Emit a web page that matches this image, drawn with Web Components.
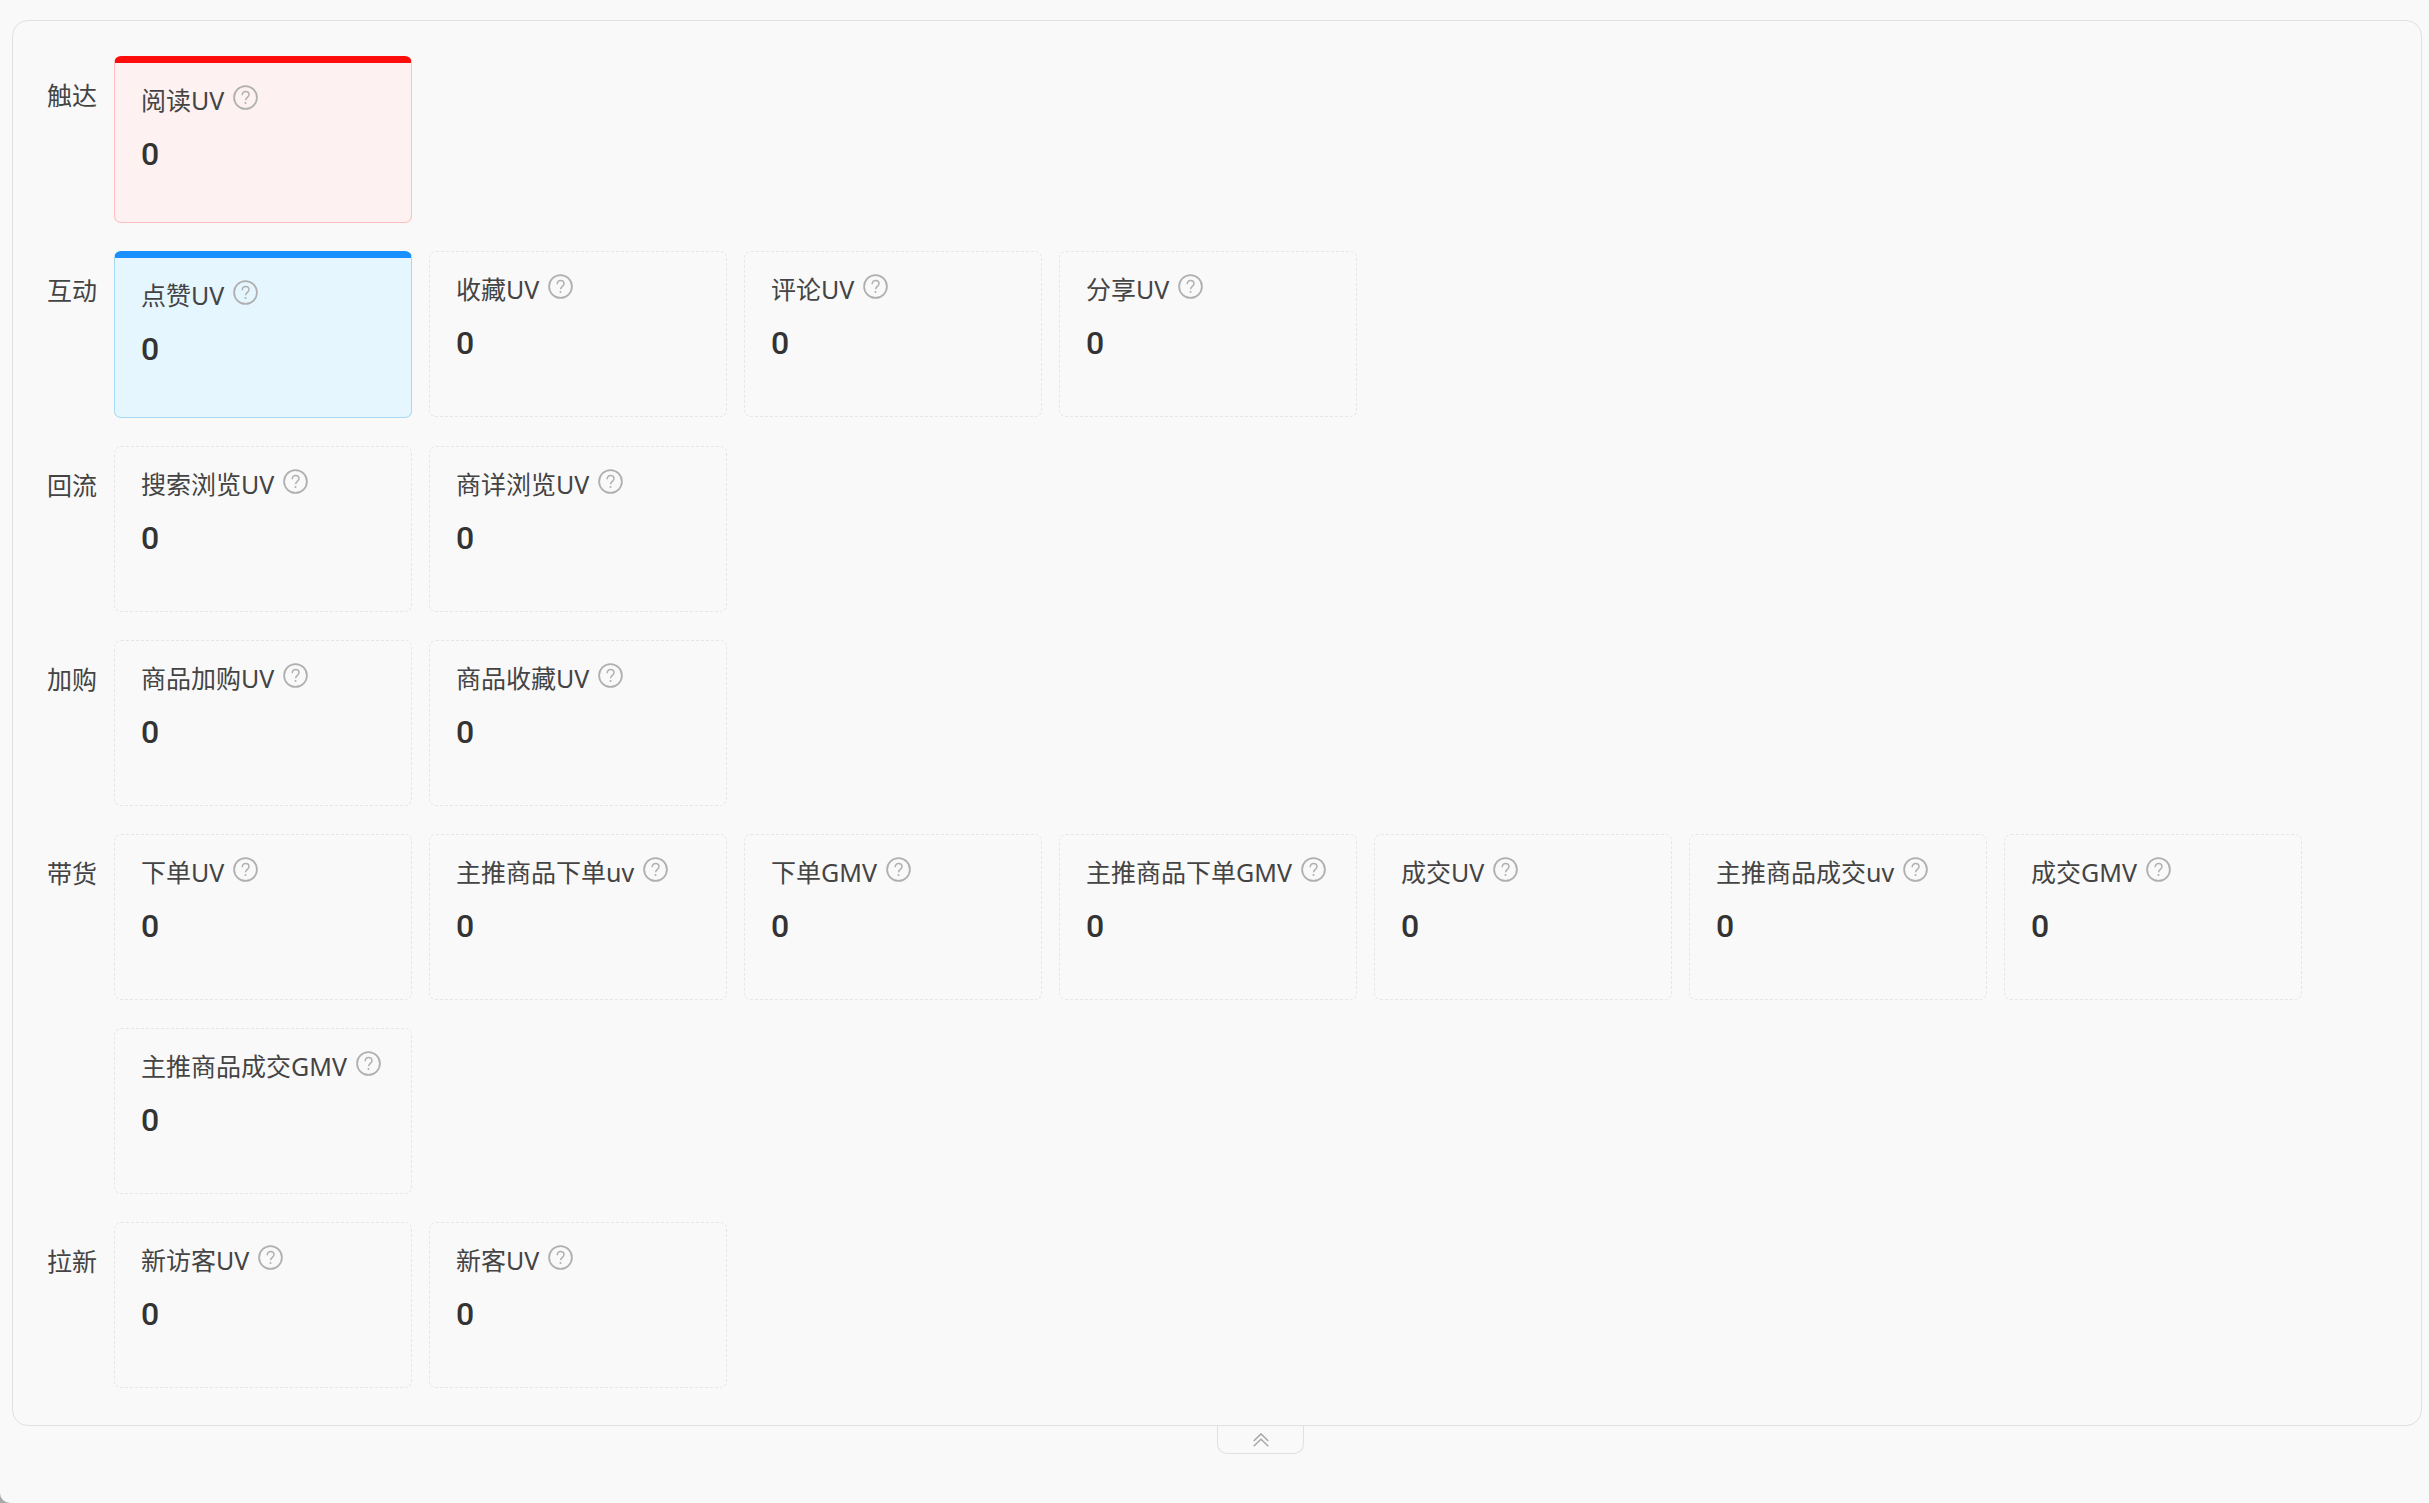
<!DOCTYPE html>
<html lang="zh-CN">
<head>
<meta charset="utf-8">
<title>UV</title>
<style>
html {
  background: #a8a8a8;
}

body {
  margin: 0;
  min-height: 100vh;
  box-sizing: border-box;
  padding: 20px 7px 20px 12px;
  background: #f9f9f9;
  border-bottom-left-radius: 10px;
  font-family: "Noto Sans", "Noto Sans CJK SC", sans-serif;
  font-weight: 400;
  font-size: 25px;
  line-height: 32px;
  color: #444;
}
</style>
</head>
<body>

<metric-panel>
  <metric-group label="触达">
    <metric-card name="阅读UV" value="0" tone="red"></metric-card>
  </metric-group>
  <metric-group label="互动">
    <metric-card name="点赞UV" value="0" tone="blue"></metric-card>
    <metric-card name="收藏UV" value="0"></metric-card>
    <metric-card name="评论UV" value="0"></metric-card>
    <metric-card name="分享UV" value="0"></metric-card>
  </metric-group>
  <metric-group label="回流">
    <metric-card name="搜索浏览UV" value="0"></metric-card>
    <metric-card name="商详浏览UV" value="0"></metric-card>
  </metric-group>
  <metric-group label="加购">
    <metric-card name="商品加购UV" value="0"></metric-card>
    <metric-card name="商品收藏UV" value="0"></metric-card>
  </metric-group>
  <metric-group label="带货">
    <metric-card name="下单UV" value="0"></metric-card>
    <metric-card name="主推商品下单uv" value="0"></metric-card>
    <metric-card name="下单GMV" value="0"></metric-card>
    <metric-card name="主推商品下单GMV" value="0"></metric-card>
    <metric-card name="成交UV" value="0"></metric-card>
    <metric-card name="主推商品成交uv" value="0"></metric-card>
    <metric-card name="成交GMV" value="0"></metric-card>
    <metric-card name="主推商品成交GMV" value="0"></metric-card>
  </metric-group>
  <metric-group label="拉新">
    <metric-card name="新访客UV" value="0"></metric-card>
    <metric-card name="新客UV" value="0"></metric-card>
  </metric-group>
</metric-panel>

<script>
const helpTemplate = document.createElement("template");
helpTemplate.innerHTML = `
<style>
:host {
  display: block;
  flex: none;
}

button {
  display: block;
  padding: 0;
  border: 0;
  background: none;
  color: #b0b0b0;
  cursor: pointer;
}

svg {
  display: block;
}
</style>

<button type="button">
  <svg width="25" height="25" viewBox="0 0 25 25" fill="none" stroke="currentColor">
    <circle cx="12.5" cy="12.5" r="11.4" stroke-width="1.8"/>
    <path d="M9.2 10.2c0-2.1 1.3-3.6 3.4-3.6s3.4 1.3 3.4 3.2c0 2.6-3.4 2.7-3.4 5.5" stroke-width="1.5"/>
    <circle cx="12.5" cy="18" r="1" fill="currentColor" stroke="none"/>
  </svg>
</button>
`;

class HelpIcon extends HTMLElement {
  connectedCallback() {
    this.attachShadow({ mode: "open" });
    this.shadowRoot.appendChild(helpTemplate.content.cloneNode(true));
  }
}

customElements.define("help-icon", HelpIcon);

const cardTemplate = document.createElement("template");
cardTemplate.innerHTML = `
<style>
:host {
  display: block;
  box-sizing: border-box;
  width: 298px;
  min-height: 166px;
  padding: 21px 16px 16px 26px;
  border: 1px dashed #e6e6e6;
  border-radius: 7px;
}

:host([tone]) {
  min-height: 167px;
  border-style: solid;
  border-top-width: 7px;
}

:host([tone="red"]) {
  border-color: #ff0d0d #ffbfbf #ffbfbf;
  background: #fef1f1;
}

:host([tone="blue"]) {
  border-color: #1890ff #a6d9f2 #a6d9f2;
  background: #e5f6ff;
}

.head {
  display: flex;
  align-items: flex-start;
  gap: 9px;
}

.name {
  white-space: nowrap;
}

help-icon {
  margin-top: 1px;
}

.value {
  margin-top: 22px;
  font-family: Roboto, sans-serif;
  font-weight: 500;
  font-size: 32px;
  line-height: 32px;
  color: #333;
}
</style>

<div class="head">
  <span class="name"></span>
  <help-icon></help-icon>
</div>
<div class="value"></div>
`;

class MetricCard extends HTMLElement {
  connectedCallback() {
    this.attachShadow({ mode: "open" });
    this.shadowRoot.appendChild(cardTemplate.content.cloneNode(true));

    this.shadowRoot.querySelector(".name").textContent = this.getAttribute("name");
    this.shadowRoot.querySelector(".value").textContent = this.getAttribute("value");
    this.shadowRoot.querySelector("help-icon").shadowRoot
      .querySelector("button").setAttribute("aria-label", this.getAttribute("name"));
  }
}

customElements.define("metric-card", MetricCard);

const groupTemplate = document.createElement("template");
groupTemplate.innerHTML = `
<style>
:host {
  display: flex;
  gap: 17px;
}

.label {
  flex: none;
  padding-top: 23px;
}

.cards {
  flex: 1;
  display: flex;
  flex-wrap: wrap;
  align-items: flex-start;
  gap: 28px 17px;
}
</style>

<div class="label"></div>
<div class="cards"><slot></slot></div>
`;

class MetricGroup extends HTMLElement {
  connectedCallback() {
    this.attachShadow({ mode: "open" });
    this.shadowRoot.appendChild(groupTemplate.content.cloneNode(true));
    this.shadowRoot.querySelector(".label").textContent = this.getAttribute("label");
  }
}

customElements.define("metric-group", MetricGroup);

const panelTemplate = document.createElement("template");
panelTemplate.innerHTML = `
<style>
:host {
  display: block;
}

.groups {
  display: flex;
  flex-direction: column;
  gap: 28px;
  padding: 35px 34px 37px;
  border: 1px solid #e0e0e0;
  border-radius: 16px;
}

.groups.folded {
  display: none;
}

.foot {
  display: flex;
  justify-content: center;
  padding-left: 87px;
}

.toggle {
  display: flex;
  justify-content: center;
  align-items: center;
  width: 87px;
  height: 28px;
  padding: 0;
  border: 1px solid #e0e0e0;
  border-top: 0;
  border-radius: 0 0 10px 10px;
  background: none;
  color: #a8a8a8;
  cursor: pointer;
}
</style>

<div class="groups"><slot></slot></div>
<div class="foot">
  <button class="toggle" type="button" aria-label="收起">
    <svg width="16" height="14" viewBox="0 0 16 14" fill="none" stroke="currentColor" stroke-width="1.5">
      <path d="M.7 8 8 .9 15.3 8M.7 13.3 8 6.2l7.3 7.1"/>
    </svg>
  </button>
</div>
`;

class MetricPanel extends HTMLElement {
  connectedCallback() {
    this.attachShadow({ mode: "open" });
    this.shadowRoot.appendChild(panelTemplate.content.cloneNode(true));

    const groups = this.shadowRoot.querySelector(".groups");
    this.shadowRoot.querySelector(".toggle").addEventListener("click", () => {
      groups.classList.toggle("folded");
    });
  }
}

customElements.define("metric-panel", MetricPanel);
</script>
</body>
</html>
